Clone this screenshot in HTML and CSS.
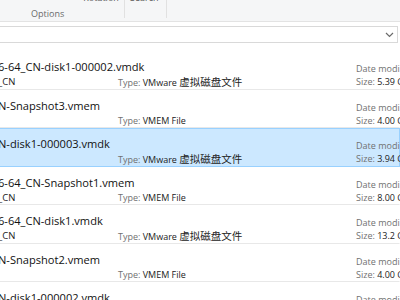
FILE: index.html
```html
<!DOCTYPE html>
<html lang="en">
<head>
    <meta charset="UTF-8">
    <title>Search results</title>
    <link rel="stylesheet" href="styles.css">
</head>
<body>
    <div class="ribbon">
        <div class="group group-options">
            <span class="group-label">Options</span>
            <span class="cmd cmd-rotate">Rotation</span>
        </div>
        <div class="group group-search">
            <span class="cmd">Search</span>
        </div>
    </div>

    <div class="addr-row">
        <div class="addr">
            <svg class="chevron" width="9" height="6" viewBox="0 0 9 6">
                <path d="M1 1 L4.5 4.5 L8 1" fill="none" stroke="#6b6b6b" stroke-width="1.2"/>
            </svg>
        </div>
    </div>

    <ul class="list">
        <li class="item">
            <div class="name-col">
                <div class="name">6-64_CN-disk1-000002.vmdk</div>
                <div class="sub">_CN</div>
            </div>
            <div class="type-col"><span class="label">Type:</span> VMware <span class="cjk">虚拟磁盘文件</span></div>
            <div class="meta-col">
                <div class="label">Date modi</div>
                <div><span class="label">Size:</span> 5.39 G</div>
            </div>
        </li>
        <li class="item">
            <div class="name-col">
                <div class="name">N-Snapshot3.vmem</div>
                <div class="sub"></div>
            </div>
            <div class="type-col"><span class="label">Type:</span> VMEM File</div>
            <div class="meta-col">
                <div class="label">Date modi</div>
                <div><span class="label">Size:</span> 4.00 G</div>
            </div>
        </li>
        <li class="item selected">
            <div class="name-col">
                <div class="name">N-disk1-000003.vmdk</div>
                <div class="sub"></div>
            </div>
            <div class="type-col"><span class="label">Type:</span> VMware <span class="cjk">虚拟磁盘文件</span></div>
            <div class="meta-col">
                <div class="label">Date modi</div>
                <div><span class="label">Size:</span> 3.94 G</div>
            </div>
        </li>
        <li class="item">
            <div class="name-col">
                <div class="name">6-64_CN-Snapshot1.vmem</div>
                <div class="sub">_CN</div>
            </div>
            <div class="type-col"><span class="label">Type:</span> VMEM File</div>
            <div class="meta-col">
                <div class="label">Date modi</div>
                <div><span class="label">Size:</span> 8.00 G</div>
            </div>
        </li>
        <li class="item">
            <div class="name-col">
                <div class="name">6-64_CN-disk1.vmdk</div>
                <div class="sub">_CN</div>
            </div>
            <div class="type-col"><span class="label">Type:</span> VMware <span class="cjk">虚拟磁盘文件</span></div>
            <div class="meta-col">
                <div class="label">Date modi</div>
                <div><span class="label">Size:</span> 13.2 G</div>
            </div>
        </li>
        <li class="item">
            <div class="name-col">
                <div class="name">N-Snapshot2.vmem</div>
                <div class="sub"></div>
            </div>
            <div class="type-col"><span class="label">Type:</span> VMEM File</div>
            <div class="meta-col">
                <div class="label">Date modi</div>
                <div><span class="label">Size:</span> 4.00 G</div>
            </div>
        </li>
        <li class="item">
            <div class="name-col">
                <div class="name">N-disk1-000002.vmdk</div>
                <div class="sub"></div>
            </div>
            <div class="type-col"></div>
            <div class="meta-col">
                <div class="label">Date modi</div>
                <div></div>
            </div>
        </li>
    </ul>
</body>
</html>
```

FILE: styles.css
```css
* {
    margin: 0;
    padding: 0;
    box-sizing: border-box;
}

body {
    width: 400px;
    height: 300px;
    overflow: hidden;
    background: #fff;
    font-family: "Open Sans", "Noto Sans CJK SC", sans-serif;
    color: #1e1e1e;
}

/* Ribbon */
.ribbon {
    display: flex;
    height: 22px;
    background: #f5f6f7;
    border-bottom: 1px solid #e3e3e3;
}

.group {
    display: flex;
    height: 18px;
    font-size: 9px;
    color: #666;
}

.group-options {
    width: 125px;
    padding-left: 31px;
    border-right: 1px solid #e1e1e1;
}

.group-label {
    align-self: flex-end;
    line-height: 12px;
    margin-bottom: -2px;
    color: #6a6a6a;
}

.group-search {
    width: 42px;
    padding-left: 5px;
    border-right: 1px solid #e1e1e1;
}

.cmd {
    align-self: flex-start;
    line-height: 10px;
    margin-top: -7px;
    color: #555;
}

.cmd-rotate {
    margin-left: 19px;
}

/* Address bar */
.addr-row {
    padding: 4px 2px 0 0;
    height: 29px;
}

.addr {
    display: flex;
    justify-content: flex-end;
    align-items: center;
    height: 17px;
    margin-left: -2px;
    border: 1px solid #d9d9d9;
    padding-right: 3px;
}

.chevron {
    display: block;
}

/* File list */
.list {
    list-style: none;
}

.item {
    display: grid;
    grid-template-columns: 118px 238px 1fr;
    height: 38.5px;
    padding-top: 7px;
    margin-left: -1px;
    border: 1px solid transparent;
    border-bottom-color: #e8e8e8;
    font-size: 9px;
    white-space: nowrap;
}

.item.selected {
    background: #cce8ff;
    border-color: #99d1ff;
}

.name-col {
    margin-left: -2px;
}

.name {
    font-size: 11.1px;
    line-height: 16px;
    height: 16px;
    color: #111;
}

.sub {
    line-height: 14px;
    height: 14px;
    font-size: 9.5px;
    color: #222;
}

.type-col {
    padding-top: 16px;
    line-height: 14px;
    color: #222;
}

.cjk {
    font-size: 10.5px;
}

.meta-col {
    padding-top: 3px;
    line-height: 13px;
    color: #222;
}

.label {
    color: #707070;
}
```
